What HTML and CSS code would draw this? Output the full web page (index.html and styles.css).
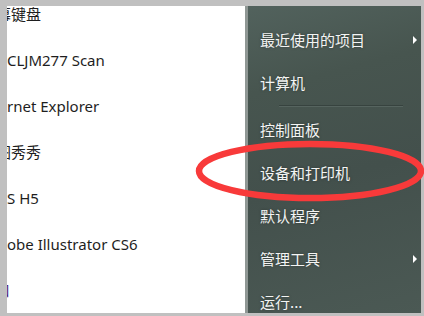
FILE: index.html
```html
<!DOCTYPE html>
<html lang="zh-CN">
<head>
<meta charset="utf-8">
<title>开始菜单</title>
<link rel="stylesheet" href="styles.css">
</head>
<body>
<div class="frame">
  <div class="menu">
    <section class="programs">
      <ul class="prog-list">
        <li class="prog cut-2">屏幕键盘</li>
        <li class="prog">CLJM277 Scan</li>
        <li class="prog">rnet Explorer</li>
        <li class="prog cut-2">美图秀秀</li>
        <li class="prog">S H5</li>
        <li class="prog">obe Illustrator CS6</li>
        <li class="prog cut-1 purple">口</li>
      </ul>
    </section>
    <nav class="places">
      <ul class="place-list">
        <li class="place"><span>最近使用的项目</span><i class="arrow"></i></li>
        <li class="place"><span>计算机</span></li>
        <li class="sep"></li>
        <li class="place"><span>控制面板</span></li>
        <li class="place"><span>设备和打印机</span></li>
        <li class="place"><span>默认程序</span></li>
        <li class="place"><span>管理工具</span><i class="arrow"></i></li>
        <li class="place"><span>运行...</span></li>
      </ul>
    </nav>
  </div>
</div>
<svg class="mark" width="424" height="316" viewBox="0 0 424 316" aria-hidden="true">
  <ellipse cx="310" cy="171" rx="111" ry="27" fill="none" stroke="#f83a3a" stroke-width="6.5"/>
</svg>
</body>
</html>
```
FILE: styles.css
```css
html, body {
  margin: 0;
  padding: 0;
}
body {
  width: 424px;
  height: 316px;
  overflow: hidden;
  background: #c0c0c0;
  position: relative;
}
.frame {
  padding: 6px 3px 3px 7px;
  height: 316px;
  box-sizing: border-box;
}
.menu {
  display: flex;
  height: 307px;
}
.programs {
  width: 238px;
  background: #ffffff;
  overflow: hidden;
}
.prog-list, .place-list {
  list-style: none;
  margin: 0;
  padding: 0;
}
.prog-list {
  margin-top: -15px;
}
.prog {
  height: 46px;
  line-height: 46px;
  white-space: nowrap;
  font-family: "Noto Sans", "Noto Sans CJK SC", sans-serif;
  font-size: 15px;
  color: #1e1e1e;
}
.cut-2 {
  margin-left: -26px;
}
.cut-1 {
  margin-left: -12px;
}
.purple {
  color: #4a1f78;
}
.places {
  flex: 1;
  border-left: 3px solid #8f9794;
  background: linear-gradient(165deg, #52625d 0%, #47554f 25%, #43504c 55%, #4b5954 100%);
  overflow: hidden;
}
.place-list {
  padding-top: 12px;
}
.place {
  height: 43px;
  display: flex;
  align-items: center;
  justify-content: space-between;
  padding: 0 4px 0 12px;
  font-family: "Noto Sans CJK SC", "Noto Sans", sans-serif;
  font-size: 15px;
  color: #f3f4f3;
  text-shadow: 0 0 3px rgba(0, 0, 0, 0.35);
}
.sep {
  height: 1px;
  margin: 1px 18px 1px 31px;
  background: #37433f;
  border-bottom: 1px solid #56645f;
}
.arrow {
  width: 0;
  height: 0;
  border-top: 4px solid transparent;
  border-bottom: 4px solid transparent;
  border-left: 4px solid #ffffff;
}
.mark {
  position: absolute;
  left: 0;
  top: 0;
  pointer-events: none;
}
```
